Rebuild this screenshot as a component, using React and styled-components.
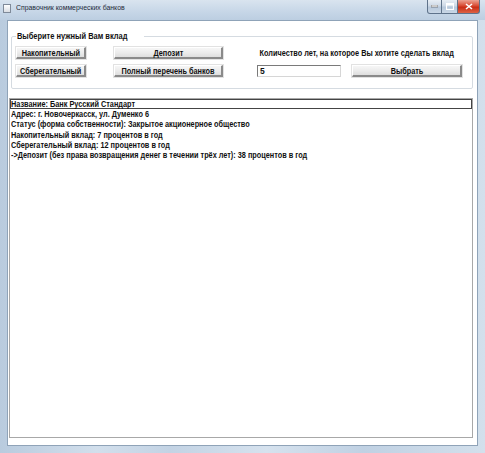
import React from "react";
import styled, { createGlobalStyle } from "styled-components";

const Global = createGlobalStyle`
  html, body { margin: 0; padding: 0; width: 485px; height: 453px; overflow: hidden; background: #9fb3c8; }
  * { box-sizing: border-box; }
`;

const Window = styled.div`
  width: 485px;
  height: 453px;
  display: flex;
  flex-direction: column;
  background: linear-gradient(90deg, #b9cbde 0%, #d2dfec 20%, #c3d3e4 35%, #d6e2ee 55%, #c0d1e3 75%, #d3e0ec 100%);
  font-family: "Liberation Sans", Arial, sans-serif;
`;

const TitleBar = styled.div`
  height: 20px;
  display: flex;
  align-items: flex-start;
  position: relative;
  background: linear-gradient(180deg, #d9e4ef 0%, #c6d6e7 60%, #bccee1 100%);
`;

const TitleIcon = styled.div`
  width: 8px;
  height: 9px;
  margin: 4px 0 0 3px;
  background: linear-gradient(180deg, #ffffff 0%, #d9dde3 100%);
  border: 1px solid #7f8a99;
`;

const TitleText = styled.div`
  margin: 3px 0 0 5px;
  font-size: 8px;
  color: #1e2b3a;
  transform: scaleX(0.86);
  transform-origin: left center;
  white-space: nowrap;
`;

const Controls = styled.div`
  position: absolute;
  right: 5px;
  top: 0;
  display: flex;
`;

const CtrlBtn = styled.div`
  width: ${(p) => p.$w}px;
  height: 14px;
  border: 1px solid #5f738b;
  border-top: none;
  border-left-width: ${(p) => (p.$first ? 1 : 0)}px;
  border-radius: ${(p) => p.$radius};
  background: ${(p) =>
    p.$close
      ? "linear-gradient(180deg, #eba393 0%, #d84a32 45%, #c92d15 55%, #dd6244 100%)"
      : "linear-gradient(180deg, #e8eef5 0%, #cdd9e6 45%, #b7c8db 55%, #c9d7e6 100%)"};
  display: flex;
  align-items: center;
  justify-content: center;
`;

const Middle = styled.div`
  flex: 1;
  display: flex;
  padding: 0 7px 0 7px;
`;

const Client = styled.div`
  flex: 1;
  background: #ffffff;
  border: 1px solid #8fa3b8;
  border-bottom: none;
  display: flex;
  flex-direction: column;
  padding: 10px 4px 7px 1px;
`;

const Group = styled.fieldset`
  margin: 0 0 0 2px;
  padding: 6px 0 11px 4px;
  border: 1px solid #d5dbe1;
  border-radius: 2px;
  height: 58px;
  min-width: 0;
`;

const Legend = styled.legend`
  padding: 0 1px;
  margin-left: 0;
  font-size: 8.5px;
  color: #111;
  font-weight: bold;
  transform: scaleX(0.88);
  transform-origin: left center;
`;

const Grid = styled.div`
  display: grid;
  grid-template-columns: 70px 28px 109px 34px 84px 11px 110px;
  grid-template-rows: 12px 12px;
  row-gap: 6px;
`;

const Btn = styled.div`
  grid-column: ${(p) => p.$col} / span 1;
  grid-row: ${(p) => p.$row};
  height: 12px;
  background: linear-gradient(180deg, #f6f6f6 0%, #ececec 50%, #dedede 100%);
  border-top: 1px solid #ffffff;
  border-left: 1px solid #ffffff;
  border-right: 2px solid #8a8a8a;
  border-bottom: 2px solid #8a8a8a;
  box-shadow: 0 0 0 1px #e2e2e2;
  display: flex;
  align-items: center;
  justify-content: center;
  font-size: 8.5px;
  font-weight: bold;
  color: #111;
  white-space: nowrap;
`;

const BtnLabel = styled.span`
  display: inline-block;
  transform: scaleX(0.86);
`;

const Label = styled.div`
  grid-column: 5 / span 3;
  grid-row: 1;
  font-size: 8.5px;
  font-weight: bold;
  color: #111;
  padding-left: 3px;
  white-space: nowrap;
  align-self: center;
  transform: scaleX(0.86);
  transform-origin: left center;
`;

const Input = styled.div`
  grid-column: 5;
  grid-row: 2;
  height: 12px;
  border: 1px solid #7a7a7a;
  border-right-color: #d6d6d6;
  border-bottom-color: #d6d6d6;
  background: #fff;
  font-size: 8.5px;
  font-weight: bold;
  color: #111;
  padding-left: 2px;
  line-height: 10px;
`;

const List = styled.div`
  flex: 1;
  margin-top: 9px;
  border: 1px solid #a8a8a8;
  background: #fff;
  display: flex;
  flex-direction: column;
`;

const Item = styled.div`
  height: 10.2px;
  line-height: 10px;
  font-size: 8.5px;
  font-weight: bold;
  color: #111;
  padding-left: 1px;
  white-space: nowrap;
  outline: ${(p) => (p.$focus ? "1px solid #444" : "none")};
  outline-offset: -1px;
`;

const ItemText = styled.span`
  display: inline-block;
  transform: scaleX(0.86);
  transform-origin: left center;
`;

const BottomFrame = styled.div`
  height: 8px;
  border-top: 1px solid #8fa3b8;
  margin: 0 7px;
`;

const items = [
  "Название: Банк Русский Стандарт",
  "Адрес: г. Новочеркасск, ул. Думенко 6",
  "Статус (форма собственности): Закрытое акционерное общество",
  "Накопительный вклад: 7 процентов в год",
  "Сберегательный вклад: 12 процентов в год",
  "->Депозит (без права возвращения денег в течении трёх лет): 38 процентов в год",
];

export default function App() {
  return (
    <>
      <Global />
      <Window>
        <TitleBar>
          <TitleIcon />
          <TitleText>Справочник коммерческих банков</TitleText>
          <Controls>
            <CtrlBtn $w={15} $first $radius="0 0 0 3px">
              <svg width="7" height="3"><rect x="0" y="0" width="7" height="2" fill="#fff" stroke="#333" strokeWidth="0.5" /></svg>
            </CtrlBtn>
            <CtrlBtn $w={16} $radius="0">
              <svg width="8" height="7"><rect x="0.5" y="0.5" width="7" height="6" fill="none" stroke="#fff" strokeWidth="1.2" /><rect x="0.5" y="0.5" width="7" height="2" fill="#fff" /></svg>
            </CtrlBtn>
            <CtrlBtn $w={22} $close $radius="0 0 3px 0">
              <svg width="8" height="7"><path d="M1 1 L7 6 M7 1 L1 6" stroke="#fff" strokeWidth="1.6" /></svg>
            </CtrlBtn>
          </Controls>
        </TitleBar>
        <Middle>
          <Client>
            <Group>
              <Legend>Выберите нужный Вам вклад</Legend>
              <Grid>
                <Btn $col={1} $row={1}><BtnLabel>Накопительный</BtnLabel></Btn>
                <Btn $col={3} $row={1}><BtnLabel>Депозит</BtnLabel></Btn>
                <Label>Количество лет, на которое Вы хотите сделать вклад</Label>
                <Btn $col={1} $row={2}><BtnLabel>Сберегательный</BtnLabel></Btn>
                <Btn $col={3} $row={2}><BtnLabel>Полный перечень банков</BtnLabel></Btn>
                <Input>5</Input>
                <Btn $col={7} $row={2}><BtnLabel>Выбрать</BtnLabel></Btn>
              </Grid>
            </Group>
            <List>
              {items.map((t, i) => (
                <Item key={i} $focus={i === 0}>
                  <ItemText>{t}</ItemText>
                </Item>
              ))}
            </List>
          </Client>
        </Middle>
        <BottomFrame />
      </Window>
    </>
  );
}
